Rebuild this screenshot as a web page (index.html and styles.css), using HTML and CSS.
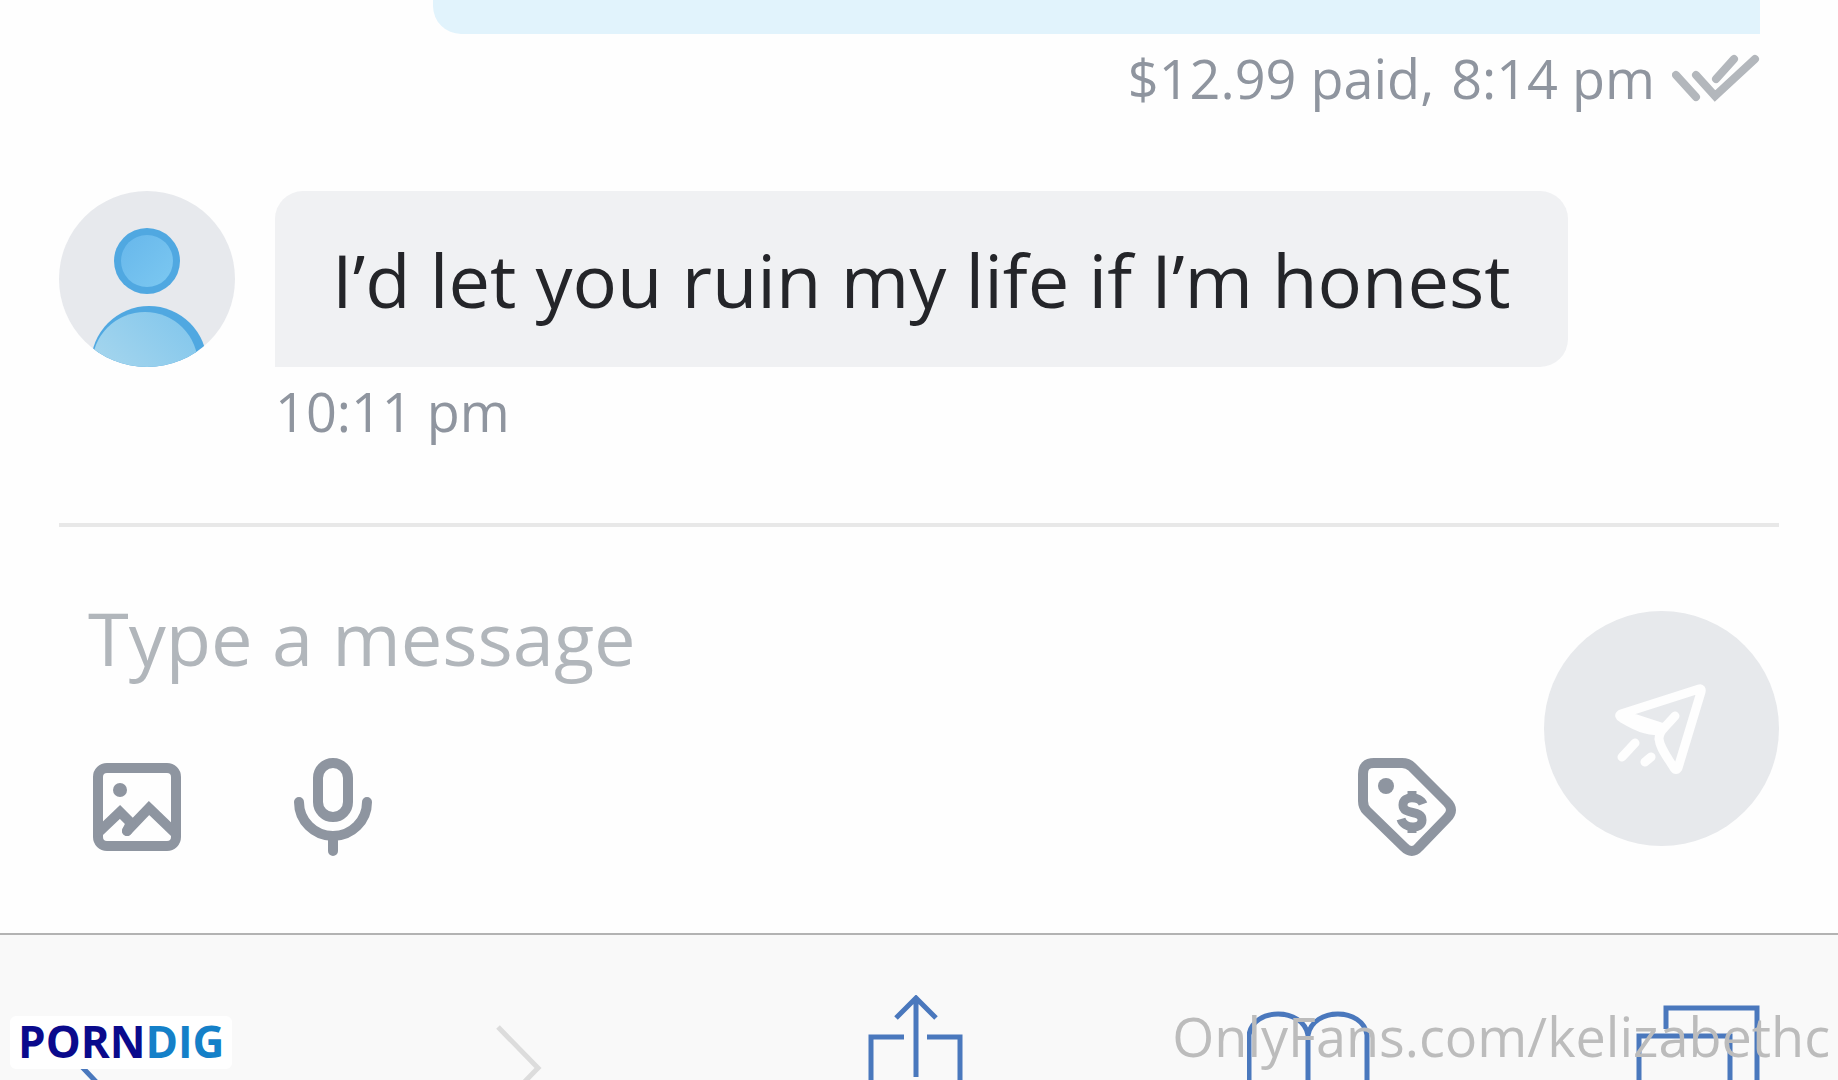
FILE: index.html
```html
<!DOCTYPE html>
<html lang="en">
<head>
    <meta charset="UTF-8">
    <meta name="viewport" content="width=device-width, initial-scale=1.0">
    <title>Messages</title>
    <link rel="stylesheet" href="styles.css">
</head>
<body>
    <main class="chat">
        <!-- Sent message -->
        <div class="message sent">
            <div class="bubble"></div>
            <p class="meta">
                <span>$12.99 paid,</span>
                <span>8:14 pm</span>
                <svg class="ticks" viewBox="0 0 88 50" aria-hidden="true">
                    <path d="M4 22L24 44M24 22L43 43L83 6M44 26L62 6" />
                </svg>
            </p>
        </div>

        <!-- Received message -->
        <div class="message received">
            <svg class="avatar" viewBox="0 0 176 176" aria-hidden="true">
                <defs>
                    <clipPath id="avatar-clip"><circle cx="88" cy="88" r="88" /></clipPath>
                    <linearGradient id="head-fill" x1="0" y1="0" x2="1" y2="1">
                        <stop offset="0" stop-color="#67b7eb" />
                        <stop offset="1" stop-color="#7cc8f1" />
                    </linearGradient>
                    <linearGradient id="body-fill" x1="1" y1="0" x2="0" y2="1">
                        <stop offset="0" stop-color="#7fc5ec" />
                        <stop offset="1" stop-color="#b4dcee" />
                    </linearGradient>
                </defs>
                <circle cx="88" cy="88" r="88" fill="#e7e9ed" />
                <g clip-path="url(#avatar-clip)">
                    <circle cx="88" cy="70" r="33" fill="#50a8e1" />
                    <circle cx="88" cy="70" r="26" fill="url(#head-fill)" />
                    <circle cx="90" cy="173" r="58" fill="#50a8e1" />
                    <circle cx="86" cy="174" r="53" fill="url(#body-fill)" />
                </g>
            </svg>
            <div class="content">
                <div class="bubble">I’d let you ruin my life if I’m honest</div>
                <p class="meta">10:11 pm</p>
            </div>
        </div>
    </main>

    <form class="composer">
        <div class="fields">
            <input class="message-input" type="text" placeholder="Type a message" aria-label="Type a message">
            <div class="tools">
                <button type="button" aria-label="Add image">
                    <svg viewBox="0 0 98 98">
                        <rect x="10" y="10" width="78" height="78" rx="9" />
                        <path d="M11 74L32 54L43 65M39 73L61 50L87 75" />
                        <path d="M43 65L39 73" />
                        <circle class="dot" cx="32" cy="32" r="7" />
                    </svg>
                </button>
                <button type="button" aria-label="Record voice">
                    <svg viewBox="0 0 98 98">
                        <rect x="34" y="5" width="30" height="54" rx="15" />
                        <path d="M15 44A34 34 0 0 0 83 44M49 80V93" />
                    </svg>
                </button>
                <button class="price" type="button" aria-label="Set price">
                    <svg viewBox="0 0 98 98">
                        <path d="M16 5H44Q50 5 54 9L89 44Q97 52 89 60L61 89Q54 97 46 89L9 53Q5 49 5 43V16Q5 5 16 5Z" />
                        <circle class="dot" cx="28" cy="28" r="8" />
                        <path class="dollar" d="M65 46C62 38 45 37 45 47C45 58 64 51 64 62C64 72 46 71 43 61M54 33V40M54 69V75" />
                    </svg>
                </button>
            </div>
        </div>
        <button class="send" type="button" aria-label="Send">
            <svg viewBox="0 0 98 98">
                <path d="M8 34L86 9Q89 8 88 12L65 88Q63 91 61 88C53 75 47 68 46 59C46 54 48 51 51 48L62 36M51 48C40 54 26 48 9 38Q5 36 8 34Z" />
                <path d="M9 77L22 63M32 82L38 77" />
            </svg>
        </button>
    </form>

    <nav class="toolbar">
        <button type="button" aria-label="Back">
            <svg viewBox="0 0 124 85"><path d="M44 32L5 73L44 114" /></svg>
        </button>
        <button class="disabled" type="button" aria-label="Forward">
            <svg viewBox="0 0 124 85"><path d="M30 32L70 73L30 114" /></svg>
        </button>
        <button type="button" aria-label="Share">
            <svg viewBox="0 0 124 85"><path d="M47 42H14V120H103V42H70M59 82V4M39 23L59 3L79 23" /></svg>
        </button>
        <button type="button" aria-label="Bookmarks">
            <svg viewBox="0 0 124 85"><path d="M2 120V40C6 12 56 12 61 40C66 12 116 12 120 40V120M61 34V120" /></svg>
        </button>
        <button type="button" aria-label="Tabs">
            <svg viewBox="0 0 124 85"><path d="M3 120V41H94V120M30 34V13H121V120" /></svg>
        </button>
    </nav>

    <div class="badge"><span>PORN</span>DIG</div>
    <div class="watermark">OnlyFans.com/kelizabethc</div>
</body>
</html>
```
FILE: styles.css
```css
* {
    box-sizing: border-box;
}
body {
    margin: 0;
    min-height: 100vh;
    position: relative;
    overflow: hidden;
    display: flex;
    flex-direction: column;
    font-family: "Open Sans", sans-serif;
    background: #fefefe;
    color: #242529;
}
p {
    margin: 0;
}
button {
    padding: 0;
    border: 0;
    background: none;
    color: inherit;
    cursor: pointer;
}
svg {
    display: block;
    fill: none;
    stroke: currentColor;
    stroke-linecap: round;
}

/* Messages */
.chat {
    padding: 0 59px;
}
.message.sent {
    display: flex;
    flex-direction: column;
    align-items: flex-end;
    padding-right: 19px;
}
.sent .bubble {
    width: 78%;
    height: 34px;
    border-radius: 0 0 0 28px;
    background: #e1f3fc;
}
.meta {
    display: flex;
    align-items: center;
    gap: 17px;
    font-size: 54px;
    line-height: 88px;
    color: #8f959f;
}
.ticks {
    width: 88px;
    height: 50px;
    stroke: #b3b7bc;
    stroke-width: 8;
}
.message.received {
    display: flex;
    gap: 40px;
    margin-top: 69px;
}
.avatar {
    width: 176px;
    height: 176px;
    flex: none;
    stroke: none;
}
.received .bubble {
    padding: 39px 57px 37px;
    border-radius: 28px 28px 28px 0;
    background: #f0f1f3;
    font-size: 74px;
    line-height: 100px;
}

/* Message form */
.composer {
    display: flex;
    align-items: flex-start;
    gap: 88px;
    margin: 68px 59px 0;
    padding: 60px 0 77px;
    border-top: 4px solid #e8e8e8;
}
.fields {
    flex: 1;
    padding-left: 29px;
}
.message-input {
    display: block;
    width: 100%;
    height: 100px;
    padding: 0;
    border: 0;
    outline: none;
    background: none;
    font-family: inherit;
    font-size: 74px;
}
.message-input::placeholder {
    color: #b1b6bb;
    opacity: 1;
}
.tools {
    display: flex;
    gap: 98px;
    margin-top: 71px;
    color: #8e95a0;
}
.tools svg {
    width: 98px;
    height: 98px;
    stroke-width: 10;
}
.tools .price {
    margin-left: auto;
}
.tools .dot {
    fill: currentColor;
    stroke: none;
}
.tools .dollar {
    stroke-width: 9;
    stroke-linecap: butt;
}
.send {
    display: flex;
    align-items: center;
    justify-content: center;
    width: 235px;
    height: 235px;
    margin-top: 24px;
    border-radius: 50%;
    background: #e7e9ec;
    color: #fefefe;
}
.send svg {
    width: 98px;
    height: 98px;
    stroke-width: 9;
    stroke-linejoin: round;
}

/* Browser bar */
.toolbar {
    flex: 1;
    display: flex;
    justify-content: space-between;
    align-items: flex-start;
    padding: 60px 78px 0;
    border-top: 2px solid #b3b3b3;
    background: #f9f9f9;
    color: #4a78bd;
}
.toolbar svg {
    width: 124px;
    height: 85px;
    stroke-width: 5;
    stroke-linecap: butt;
}
.toolbar .disabled {
    color: #dcdcdc;
}

/* Overlays */
.badge {
    position: absolute;
    left: 10px;
    bottom: 11px;
    padding: 0 8px 3px;
    border-radius: 6px;
    background: #fff;
    font-size: 44px;
    font-weight: bold;
    line-height: 50px;
    color: #1480c8;
}
.badge span {
    color: #0a0a8c;
}
.watermark {
    position: absolute;
    right: 8px;
    bottom: 8px;
    font-size: 54px;
    line-height: 72px;
    color: #bcbcbc;
}
```
